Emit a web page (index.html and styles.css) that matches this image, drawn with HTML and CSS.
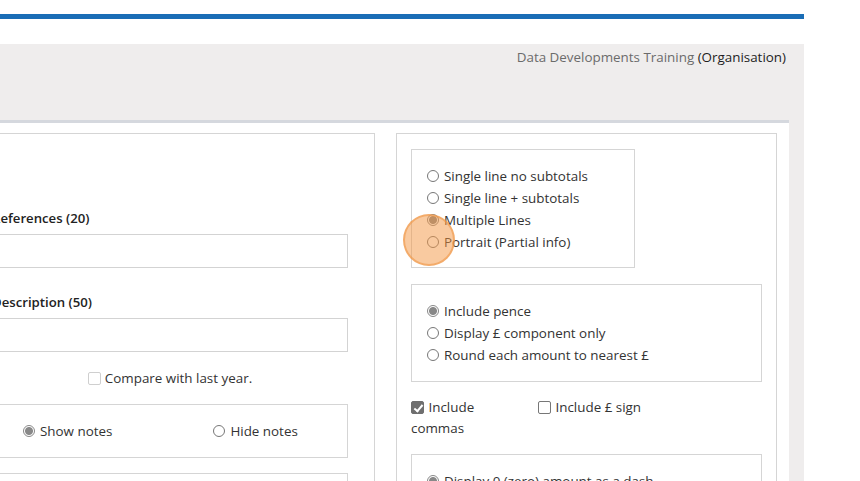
FILE: index.html
```html
<!DOCTYPE html>
<html lang="en">
<head>
    <meta charset="UTF-8">
    <title>Report Options</title>
    <link rel="stylesheet" href="styles.css">
</head>
<body>
    <div class="brand-line"></div>
    <div class="shell">
        <div class="org-bar">
            <span class="org-name">Data Developments Training</span>
            <span class="org-type">(Organisation)</span>
        </div>
        <div class="sheet">
            <div class="col col-left">
                <div class="field">
                    <label for="refs">References (20)</label>
                    <input type="text" id="refs">
                </div>
                <div class="field">
                    <label for="desc">Description (50)</label>
                    <input type="text" id="desc">
                </div>
                <div class="compare">
                    <label class="opt"><input type="checkbox" disabled>Compare with last year.</label>
                </div>
                <div class="group notes">
                    <label class="opt"><input type="radio" name="notes" checked>Show notes</label>
                    <label class="opt"><input type="radio" name="notes">Hide notes</label>
                </div>
                <div class="group"></div>
            </div>
            <div class="col col-right">
                <div class="group lines">
                    <label class="opt"><input type="radio" name="layout">Single line no subtotals</label>
                    <label class="opt"><input type="radio" name="layout">Single line + subtotals</label>
                    <label class="opt"><input type="radio" name="layout" checked>Multiple Lines</label>
                    <label class="opt"><input type="radio" name="layout">Portrait (Partial info)</label>
                </div>
                <div class="group">
                    <label class="opt"><input type="radio" name="pence" checked>Include pence</label>
                    <label class="opt"><input type="radio" name="pence">Display £ component only</label>
                    <label class="opt"><input type="radio" name="pence">Round each amount to nearest £</label>
                </div>
                <div class="checks">
                    <label class="opt wrap"><input type="checkbox" checked> Include commas</label>
                    <label class="opt wrap"><input type="checkbox"> Include £ sign</label>
                </div>
                <div class="group">
                    <label class="opt"><input type="radio" name="zero" checked>Display 0 (zero) amount as a dash</label>
                    <label class="opt"><input type="radio" name="zero">Display 0 (zero) amount as 0.00</label>
                </div>
            </div>
        </div>
    </div>
    <div class="click-mark"></div>
</body>
</html>
```

FILE: styles.css
```css
html {
    overflow: hidden;
}
body {
    font-family: 'Open Sans', Arial, sans-serif;
    font-size: 13.4px;
    margin: 0;
    background: white;
    color: #333;
}
.brand-line {
    margin-top: 14px;
    width: 804px;
    height: 5px;
    background: #1a6db6;
}
.shell {
    margin-top: 25px;
    width: 804px;
    background: #efeded;
    height: 600px;
}
.org-bar {
    height: 76px;
    box-sizing: border-box;
    padding: 4px 18px 0 0;
    text-align: right;
    line-height: 18px;
}
.org-name {
    color: #6b6b6b;
}
.org-type {
    color: #1e1e1e;
}
.sheet {
    margin-left: -60px;
    margin-right: 15px;
    border-top: 3px solid #d5d8de;
    background: white;
    padding: 10px 12px 0 12px;
    display: grid;
    grid-template-columns: 1fr 381px;
    gap: 21px;
    height: 500px;
}
.col {
    border: 1px solid #d5d5d5;
}
.col-left {
    padding: 75px 26px 0 39px;
}
.col-right {
    padding: 15px 14px 0 14px;
}
.field {
    margin-bottom: 25px;
}
.field label {
    display: block;
    font-weight: 600;
    font-size: 13.2px;
    color: #222;
    line-height: 18px;
    margin-bottom: 7px;
}
.field input {
    display: block;
    box-sizing: border-box;
    width: 100%;
    height: 34px;
    border: 1px solid #d3d3d3;
    margin: 0;
}
.compare {
    margin-top: -9px;
    text-align: center;
}
.compare .opt {
    display: inline-flex;
    line-height: 20px;
}
.compare .opt input {
    margin-right: 4px;
}
.group {
    border: 1px solid #d5d5d5;
    padding: 15px;
    margin-top: 15px;
}
.notes {
    display: flex;
    gap: 101px;
    padding: 15px 0 15px 30px;
}
.lines {
    width: 192px;
    margin-top: 0;
    padding-bottom: 14px;
}
.col-right .group + .group {
    margin-top: 16px;
}
.opt {
    display: flex;
    align-items: center;
    line-height: 22px;
    white-space: nowrap;
}
.opt input {
    appearance: none;
    margin: 0 5px 0 0;
    flex: none;
}
input[type="radio"] {
    width: 12px;
    height: 12px;
    border: 1px solid #777;
    border-radius: 50%;
    background: white;
}
input[type="radio"]:checked {
    border-color: #888;
    background: radial-gradient(circle, #888 0 3.5px, white 4.5px);
}
input[type="checkbox"] {
    width: 13px;
    height: 13px;
    border: 1px solid #777;
    border-radius: 2px;
    background: white;
    position: relative;
}
input[type="checkbox"]:disabled {
    border-color: #cfcfcf;
}
input[type="checkbox"]:checked {
    background: #6f6f6f;
    border-color: #6f6f6f;
}
input[type="checkbox"]:checked::after {
    content: '';
    position: absolute;
    left: 3.5px;
    top: 0.5px;
    width: 3px;
    height: 7px;
    border: solid white;
    border-width: 0 2px 2px 0;
    transform: rotate(40deg);
}
.checks {
    display: flex;
    gap: 17px;
    margin-top: 15px;
    line-height: 21px;
}
.checks .wrap {
    display: block;
    width: 110px;
    white-space: normal;
    line-height: 21px;
}
.checks .wrap input {
    vertical-align: -2px;
    margin-right: 1px;
}
.checks + .group {
    margin-top: 15px !important;
}
.click-mark {
    position: absolute;
    left: 403px;
    top: 214px;
    width: 52px;
    height: 52px;
    box-sizing: border-box;
    border-radius: 50%;
    background: rgba(244, 150, 65, 0.5);
    border: 2px solid rgba(238, 150, 70, 0.6);
}
```
